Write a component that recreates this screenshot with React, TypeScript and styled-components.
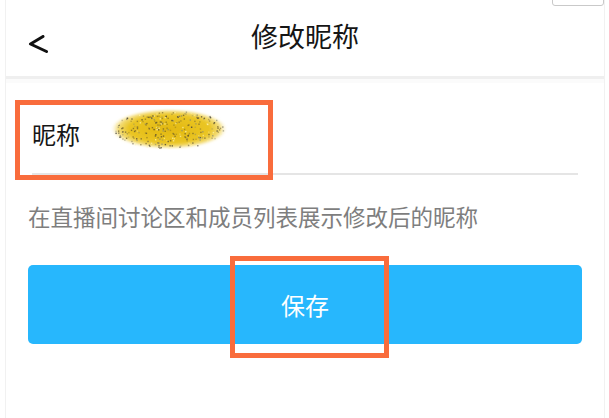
import React from "react";
import styled, { createGlobalStyle } from "styled-components";

const Global = createGlobalStyle`
  html, body { margin: 0; padding: 0; background: #ffffff; }
  body { font-family: "Noto Sans CJK SC", "Noto Sans", sans-serif; }
  * { box-sizing: border-box; }
`;

const Screen = styled.div`
  position: relative;
  width: 609px;
  height: 418px;
  padding: 0 4px 0 5px;
  background: #ffffff;
  overflow: hidden;
`;

const Phone = styled.div`
  height: 100%;
  border-left: 1px solid #f1f1f1;
  border-right: 1px solid #f1f1f1;
  display: flex;
  flex-direction: column;
`;

const Header = styled.header`
  height: 79px;
  flex: none;
  display: grid;
  grid-template-columns: 1fr auto 1fr;
  align-items: center;
  border-bottom: 3px solid #efefef;
  box-shadow: 0 4px 0 #fbfbfb;
`;

const BackButton = styled.button`
  justify-self: start;
  margin: 12px 0 0 22px;
  padding: 0;
  border: none;
  background: none;
  width: 21px;
  height: 18px;
  display: flex;
`;

const Title = styled.h1`
  margin: 0 0 4px;
  font-size: 27px;
  font-weight: 400;
  color: #151515;
  line-height: 36px;
  letter-spacing: 0;
`;

const FieldRow = styled.div`
  margin: 18px 26px 0;
  height: 78px;
  display: flex;
  align-items: center;
  border-bottom: 2px solid #e5e5e5;
  padding-bottom: 2px;
`;

const Label = styled.span`
  font-size: 24px;
  color: #161616;
  line-height: 30px;
  flex: none;
`;

const Masked = styled.svg`
  margin-left: 30px;
  margin-bottom: 10px;
  flex: none;
`;

const Hint = styled.p`
  margin: 26px 0 0 22px;
  font-size: 22.5px;
  line-height: 30px;
  color: #7e7e7e;
`;

const SaveButton = styled.button`
  margin: 34px 22px 0;
  height: 79px;
  border: none;
  border-radius: 5px;
  background: #27b7fd;
  color: #ffffff;
  font-family: "Noto Sans CJK SC", sans-serif;
  font-size: 24px;
  font-weight: 400;
  padding: 0;
`;

const TopTab = styled.div`
  position: absolute;
  left: 552px;
  top: -1px;
  width: 52px;
  height: 7px;
  border: 1px solid #c9c9c9;
  border-radius: 0 0 3px 3px;
  background: #ffffff;
`;

const Highlight = styled.div<{ $x: number; $y: number; $w: number; $h: number }>`
  position: absolute;
  left: ${(p) => p.$x}px;
  top: ${(p) => p.$y}px;
  width: ${(p) => p.$w}px;
  height: ${(p) => p.$h}px;
  border: 5px solid #f96c3c;
  pointer-events: none;
`;

function speckles() {
  const out: { x: number; y: number; o: number; c: string }[] = [];
  let s = 17;
  const rnd = () => {
    s = (s * 9301 + 49297) % 233280;
    return s / 233280;
  };
  const cols = ["#4a4130", "#6b5a22", "#8a8a70", "#fff4b0", "#3e3a33"];
  for (let i = 0; i < 420; i++) {
    const x = rnd() * 118;
    const y = rnd() * 42;
    const dx = (x - 59) / 56;
    const dy = (y - 21) / 19;
    if (dx * dx + dy * dy < 1)
      out.push({ x, y, o: 0.3 + rnd() * 0.5, c: cols[Math.floor(rnd() * cols.length)] });
  }
  return out;
}

const dots = speckles();

export default function App() {
  return (
    <>
      <Global />
      <Screen>
        <Phone>
          <Header>
            <BackButton aria-label="返回">
              <svg width="21" height="18" viewBox="0 0 21 18">
                <polyline
                  points="15,1.5 2.5,9 18.5,16.5"
                  fill="none"
                  stroke="#111"
                  strokeWidth="3"
                  strokeLinecap="round"
                  strokeLinejoin="round"
                />
              </svg>
            </BackButton>
            <Title>修改昵称</Title>
            <span />
          </Header>
          <FieldRow>
            <Label>昵称</Label>
            <Masked width="118" height="42" viewBox="0 0 118 42">
              <defs>
                <radialGradient id="yb" cx="50%" cy="50%" r="50%">
                  <stop offset="0%" stopColor="#e2b810" />
                  <stop offset="70%" stopColor="#eac524" />
                  <stop offset="88%" stopColor="#f1d660" stopOpacity="0.85" />
                  <stop offset="100%" stopColor="#fbf0c0" stopOpacity="0" />
                </radialGradient>
                <filter id="soft" x="-10%" y="-20%" width="120%" height="140%">
                  <feGaussianBlur stdDeviation="1.2" />
                </filter>
              </defs>
              <ellipse cx="59" cy="21" rx="58" ry="20" fill="url(#yb)" filter="url(#soft)" />
              {dots.map((d, i) => (
                <rect
                  key={i}
                  x={d.x}
                  y={d.y}
                  width="1.4"
                  height="1.4"
                  fill={d.c}
                  opacity={d.o}
                />
              ))}
            </Masked>
          </FieldRow>
          <Hint>在直播间讨论区和成员列表展示修改后的昵称</Hint>
          <SaveButton>保存</SaveButton>
        </Phone>
        <TopTab />
        <Highlight $x={15} $y={100} $w={258} $h={80} />
        <Highlight $x={230} $y={256} $w={159} $h={102} />
      </Screen>
    </>
  );
}
